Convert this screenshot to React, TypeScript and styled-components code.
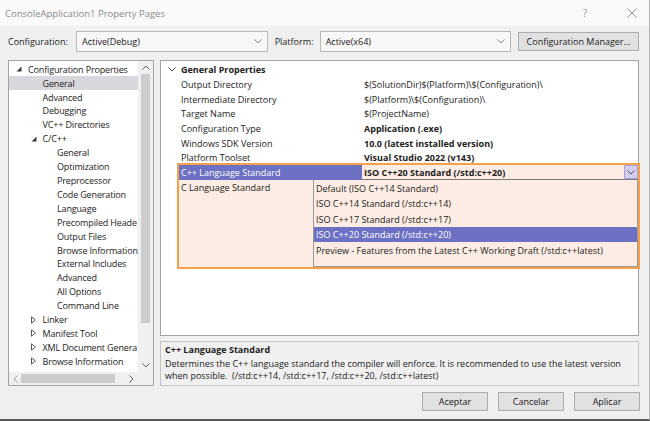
import styled, { createGlobalStyle } from "styled-components";

const GlobalStyle = createGlobalStyle`
  html, body {
    margin: 0;
    padding: 0;
    background: #f0f0f0;
  }
  body {
    font-family: "Open Sans", "Noto Sans", sans-serif;
    font-size: 9px;
    color: #222;
  }
`;

const Window = styled.div`
  width: 650px;
  height: 421px;
  box-sizing: border-box;
  display: flex;
  flex-direction: column;
  background: #f0f0f0;
  border-bottom: 2px solid #5a5a5a;
  border-right: 1px solid #b4b4b4;
`;

const TitleBar = styled.div`
  height: 26px;
  display: flex;
  align-items: center;
  padding: 0 12px 0 5px;
  background: #fafafa;
  color: #8a8a8a;
  font-size: 9.5px;
`;
const TitleText = styled.div`
  flex: 1;
`;
const TitleHelp = styled.span`
  color: #999;
  font-size: 10px;
  margin-right: 40px;
`;

const ConfigBar = styled.div`
  height: 21px;
  margin-top: 5px;
  padding: 0 10px 0 8px;
  display: flex;
  align-items: center;
`;
const Label = styled.span<{ $w: number }>`
  width: ${(p) => p.$w}px;
  flex-shrink: 0;
`;
const Select = styled.div<{ $w: number }>`
  width: ${(p) => p.$w}px;
  height: 21px;
  box-sizing: border-box;
  border: 1px solid #b9b9b9;
  background: #f7f7f7;
  display: flex;
  align-items: center;
  justify-content: space-between;
  padding: 0 5px 0 5px;
  margin-right: 7px;
`;
const Button = styled.div<{ $w: number }>`
  width: ${(p) => p.$w}px;
  height: 19px;
  box-sizing: border-box;
  border: 1px solid #adadad;
  background: #e1e1e1;
  display: flex;
  align-items: center;
  justify-content: center;
`;

const Main = styled.div`
  margin-top: 8px;
  height: 326px;
  padding: 0 10px 0 8px;
  display: flex;
  gap: 6px;
`;

const TreeBox = styled.div`
  width: 146px;
  flex-shrink: 0;
  box-sizing: border-box;
  border: 1px solid #a3a3a3;
  background: #fff;
  display: grid;
  grid-template-columns: 1fr 15px;
  grid-template-rows: 1fr 13px;
`;
const TreeList = styled.div`
  overflow: hidden;
  padding-top: 1.3px;
  letter-spacing: -0.15px;
`;
const TreeRow = styled.div<{ $level: number; $selected?: boolean }>`
  height: 13.92px;
  display: flex;
  align-items: center;
  white-space: nowrap;
  padding-left: ${(p) => 7 + p.$level * 14.5}px;
  background: ${(p) => (p.$selected ? "#d8d8dc" : "transparent")};
`;
const TreeIcon = styled.span`
  width: 12px;
  flex-shrink: 0;
  display: flex;
  align-items: center;
`;
const VScroll = styled.div`
  background: #f0f0f0;
  display: flex;
  flex-direction: column;
  align-items: center;
`;
const ScrollArrow = styled.div<{ $w?: number }>`
  height: 13px;
  width: ${(p) => (p.$w ? `${p.$w}px` : "auto")};
  display: flex;
  align-items: center;
  justify-content: center;
`;
const Spacer = styled.div`
  flex: 1;
`;
const VThumb = styled.div`
  width: 9px;
  height: 249px;
  background: #cdcdcd;
`;
const HScroll = styled.div`
  background: #f0f0f0;
  display: flex;
  align-items: center;
`;
const HThumb = styled.div`
  width: 94px;
  height: 9px;
  background: #cdcdcd;
`;
const Corner = styled.div`
  background: #f0f0f0;
`;

const RightCol = styled.div`
  flex: 1;
  display: flex;
  flex-direction: column;
  gap: 5px;
`;
const Grid = styled.div`
  flex: 1;
  box-sizing: border-box;
  border: 1px solid #a3a3a3;
  background: #fff;
  padding-top: 1.5px;
`;
const GridRow = styled.div<{ $bold?: boolean }>`
  height: 14.7px;
  display: grid;
  grid-template-columns: 18px 183px 1fr;
  align-items: center;
  white-space: nowrap;
  font-weight: ${(p) => (p.$bold ? 700 : 400)};
`;
const Gutter = styled.div`
  display: flex;
  justify-content: center;
  padding-left: 3px;
`;
const Cell = styled.div<{ $bold?: boolean }>`
  padding-left: 2px;
  font-weight: ${(p) => (p.$bold ? 700 : "inherit")};
`;

const Highlight = styled.div`
  position: relative;
  margin: -2px -2px 0 16px;
  height: 102px;
  border: 2px solid #f6a04b;
  background: #fdece3;
`;
const HiRow = styled.div`
  height: 14.7px;
  display: grid;
  grid-template-columns: 183px 1fr;
  align-items: center;
  white-space: nowrap;
`;
const NameCell = styled.div<{ $active?: boolean }>`
  height: 100%;
  display: flex;
  align-items: center;
  padding-left: 2px;
  background: ${(p) => (p.$active ? "#6c71c4" : "transparent")};
  color: ${(p) => (p.$active ? "#fff" : "inherit")};
`;
const Combo = styled.div`
  height: 100%;
  box-sizing: border-box;
  display: flex;
  align-items: center;
  justify-content: space-between;
  padding-left: 2px;
  font-weight: 700;
  border-bottom: 1px solid #7a7a7a;
`;
const ComboBtn = styled.div`
  width: 14px;
  height: 14px;
  box-sizing: border-box;
  border: 1px solid #a9a1d8;
  background: #d3cdee;
  display: flex;
  align-items: center;
  justify-content: center;
`;
const DropList = styled.div`
  position: absolute;
  left: 134px;
  right: 0;
  top: 15px;
  height: 87px;
  box-sizing: border-box;
  border: 1px solid #9a9a9a;
  border-top: none;
`;
const DropItem = styled.div<{ $active?: boolean }>`
  height: 15.5px;
  display: flex;
  align-items: center;
  padding-left: 2px;
  white-space: nowrap;
  background: ${(p) => (p.$active ? "#6c71c4" : "transparent")};
  color: ${(p) => (p.$active ? "#fff" : "inherit")};
`;

const Desc = styled.div`
  height: 45px;
  box-sizing: border-box;
  border: 1px solid #c4c4c4;
  padding: 2px 4px;
  line-height: 11.4px;
`;
const DescTitle = styled.div`
  font-weight: 700;
  margin-bottom: 3px;
`;

const Footer = styled.div`
  flex: 1;
  display: flex;
  justify-content: flex-end;
  align-items: flex-start;
  gap: 10px;
  padding: 6px 9px 0 0;
`;

const Chevron = ({ color = "#555" }: { color?: string }) => (
  <svg width="8" height="5" viewBox="0 0 8 5">
    <path d="M0.5 0.5 L4 4 L7.5 0.5" fill="none" stroke={color} strokeWidth="1" />
  </svg>
);
const ChevronUp = () => (
  <svg width="8" height="5" viewBox="0 0 8 5">
    <path d="M0.5 4.5 L4 1 L7.5 4.5" fill="none" stroke="#606060" strokeWidth="1" />
  </svg>
);
const ChevronRight = () => (
  <svg width="5" height="8" viewBox="0 0 5 8">
    <path d="M0.5 0.5 L4 4 L0.5 7.5" fill="none" stroke="#606060" strokeWidth="1" />
  </svg>
);
const ChevronLeft = () => (
  <svg width="5" height="8" viewBox="0 0 5 8">
    <path d="M4.5 0.5 L1 4 L4.5 7.5" fill="none" stroke="#a0a0a0" strokeWidth="1" />
  </svg>
);
const Expanded = () => (
  <svg width="6" height="6" viewBox="0 0 6 6">
    <polygon points="5.5,0.5 5.5,5.5 0.5,5.5" fill="#3a3a3a" />
  </svg>
);
const Collapsed = () => (
  <svg width="5" height="8" viewBox="0 0 5 8">
    <polygon points="0.5,0.8 4.4,4 0.5,7.2" fill="none" stroke="#5a5a5a" strokeWidth="1" />
  </svg>
);
const CloseX = () => (
  <svg width="10" height="10" viewBox="0 0 10 10">
    <path d="M0.5 0.5 L9.5 9.5 M9.5 0.5 L0.5 9.5" stroke="#8a8a8a" strokeWidth="0.9" />
  </svg>
);

type TreeItem = { label: string; level: number; icon?: "open" | "closed"; selected?: boolean };

// labels as far as the narrow tree shows them
const treeItems: TreeItem[] = [
  { label: "Configuration Properties", level: 0, icon: "open" },
  { label: "General", level: 1, selected: true },
  { label: "Advanced", level: 1 },
  { label: "Debugging", level: 1 },
  { label: "VC++ Directories", level: 1 },
  { label: "C/C++", level: 1, icon: "open" },
  { label: "General", level: 2 },
  { label: "Optimization", level: 2 },
  { label: "Preprocessor", level: 2 },
  { label: "Code Generation", level: 2 },
  { label: "Language", level: 2 },
  { label: "Precompiled Heade", level: 2 },
  { label: "Output Files", level: 2 },
  { label: "Browse Information", level: 2 },
  { label: "External Includes", level: 2 },
  { label: "Advanced", level: 2 },
  { label: "All Options", level: 2 },
  { label: "Command Line", level: 2 },
  { label: "Linker", level: 1, icon: "closed" },
  { label: "Manifest Tool", level: 1, icon: "closed" },
  { label: "XML Document Genera", level: 1, icon: "closed" },
  { label: "Browse Information", level: 1, icon: "closed" },
];

const props: { name: string; value: string; bold?: boolean }[] = [
  { name: "Output Directory", value: "$(SolutionDir)$(Platform)\\$(Configuration)\\" },
  { name: "Intermediate Directory", value: "$(Platform)\\$(Configuration)\\" },
  { name: "Target Name", value: "$(ProjectName)" },
  { name: "Configuration Type", value: "Application (.exe)", bold: true },
  { name: "Windows SDK Version", value: "10.0 (latest installed version)", bold: true },
  { name: "Platform Toolset", value: "Visual Studio 2022 (v143)", bold: true },
];

const options = [
  "Default (ISO C++14 Standard)",
  "ISO C++14 Standard (/std:c++14)",
  "ISO C++17 Standard (/std:c++17)",
  "ISO C++20 Standard (/std:c++20)",
  "Preview - Features from the Latest C++ Working Draft (/std:c++latest)",
];

export default function App() {
  return (
    <>
      <GlobalStyle />
      <Window>
        <TitleBar>
          <TitleText>ConsoleApplication1 Property Pages</TitleText>
          <TitleHelp>?</TitleHelp>
          <CloseX />
        </TitleBar>

        <ConfigBar>
          <Label $w={68}>Configuration:</Label>
          <Select $w={192}>
            <span>Active(Debug)</span>
            <Chevron color="#888" />
          </Select>
          <Label $w={45}>Platform:</Label>
          <Select $w={192}>
            <span>Active(x64)</span>
            <Chevron color="#888" />
          </Select>
          <Button $w={121}>Configuration Manager...</Button>
        </ConfigBar>

        <Main>
          <TreeBox>
            <TreeList>
              {treeItems.map((item, i) => (
                <TreeRow key={i} $level={item.level} $selected={item.selected}>
                  <TreeIcon>
                    {item.icon === "open" && <Expanded />}
                    {item.icon === "closed" && <Collapsed />}
                  </TreeIcon>
                  {item.label}
                </TreeRow>
              ))}
            </TreeList>
            <VScroll>
              <ScrollArrow>
                <ChevronUp />
              </ScrollArrow>
              <VThumb />
              <Spacer />
              <ScrollArrow>
                <Chevron color="#606060" />
              </ScrollArrow>
            </VScroll>
            <HScroll>
              <ScrollArrow $w={12}>
                <ChevronLeft />
              </ScrollArrow>
              <HThumb />
              <Spacer />
              <ScrollArrow $w={13}>
                <ChevronRight />
              </ScrollArrow>
            </HScroll>
            <Corner />
          </TreeBox>

          <RightCol>
            <Grid>
              <GridRow $bold>
                <Gutter>
                  <Chevron color="#444" />
                </Gutter>
                <Cell>General Properties</Cell>
                <Cell />
              </GridRow>
              {props.map((p) => (
                <GridRow key={p.name}>
                  <Gutter />
                  <Cell>{p.name}</Cell>
                  <Cell $bold={p.bold}>{p.value}</Cell>
                </GridRow>
              ))}
              <Highlight>
                <HiRow>
                  <NameCell $active>C++ Language Standard</NameCell>
                  <Combo>
                    <span>ISO C++20 Standard (/std:c++20)</span>
                    <ComboBtn>
                      <Chevron color="#555" />
                    </ComboBtn>
                  </Combo>
                </HiRow>
                <HiRow>
                  <NameCell>C Language Standard</NameCell>
                  <div />
                </HiRow>
                <DropList>
                  {options.map((o, i) => (
                    <DropItem key={o} $active={i === 3}>
                      {o}
                    </DropItem>
                  ))}
                </DropList>
              </Highlight>
            </Grid>
            <Desc>
              <DescTitle>C++ Language Standard</DescTitle>
              Determines the C++ language standard the compiler will enforce. It is recommended to use the latest version
              when possible. &nbsp;(/std:c++14, /std:c++17, /std:c++20, /std:c++latest)
            </Desc>
          </RightCol>
        </Main>

        <Footer>
          <Button $w={66}>Aceptar</Button>
          <Button $w={66}>Cancelar</Button>
          <Button $w={66}>Aplicar</Button>
        </Footer>
      </Window>
    </>
  );
}
